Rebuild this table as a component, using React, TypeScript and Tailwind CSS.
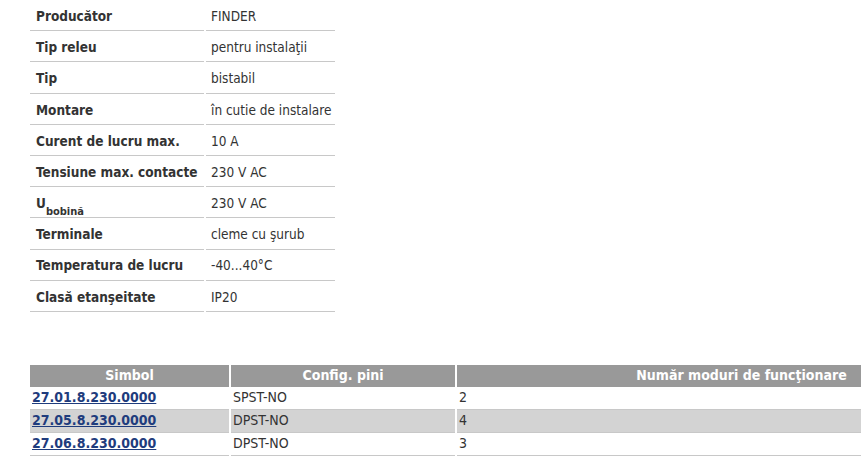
const specs: [React.ReactNode, string][] = [
  ["Producător", "FINDER"],
  ["Tip releu", "pentru instalaţii"],
  ["Tip", "bistabil"],
  ["Montare", "în cutie de instalare"],
  ["Curent de lucru max.", "10 A"],
  ["Tensiune max. contacte", "230 V AC"],
  [
    <>
      U<sub className="text-[11px] align-[-4px]">bobină</sub>
    </>,
    "230 V AC",
  ],
  ["Terminale", "cleme cu şurub"],
  ["Temperatura de lucru", "-40...40°C"],
  ["Clasă etanşeitate", "IP20"],
];

const products = [
  { symbol: "27.01.8.230.0000", pins: "SPST-NO", modes: "2" },
  { symbol: "27.05.8.230.0000", pins: "DPST-NO", modes: "4" },
  { symbol: "27.06.8.230.0000", pins: "DPST-NO", modes: "3" },
];

export default function App() {
  return (
    <div
      className="w-[861px] h-[464px] overflow-hidden bg-white text-[#333] text-[14px]"
      style={{ fontFamily: '"DejaVu Sans Condensed", "DejaVu Sans", sans-serif' }}
    >
      {/* Spec table */}
      <table className="ml-[28px] text-[13.5px] border-separate border-spacing-x-[2px] border-spacing-y-0">
        <tbody>
          {specs.map(([label, value], i) => (
            <tr key={i}>
              <td className="w-[174px] h-[31.2px] pl-[6px] pt-[2px] font-bold border-b border-[#c8c8c8] whitespace-nowrap">
                {label}
              </td>
              <td className="w-[129px] h-[31.2px] pl-[5px] pt-[2px] border-b border-[#c8c8c8] whitespace-nowrap">
                {value}
              </td>
            </tr>
          ))}
        </tbody>
      </table>

      {/* Product table */}
      <table className="mt-[53px] ml-[28px] table-fixed w-[1000px] border-separate border-spacing-x-[2px] border-spacing-y-0">
        <thead>
          <tr className="bg-[#999] text-white font-bold">
            <th className="w-[199px] h-[22px] text-center">Simbol</th>
            <th className="w-[224px] h-[22px] text-center">Config. pini</th>
            <th className="h-[22px] text-center">Număr moduri de funcţionare</th>
          </tr>
        </thead>
        <tbody>
          {products.map((p, i) => (
            <tr key={p.symbol} className={i === 1 ? "bg-[#d3d3d3]" : ""}>
              <td className="h-[23px] pl-[2px] border-b border-[#c8c8c8]">
                <a href="#" className="font-bold text-[#1f3c7d] underline">
                  {p.symbol}
                </a>
              </td>
              <td className="h-[23px] pl-[2px] border-b border-[#c8c8c8]">{p.pins}</td>
              <td className="h-[23px] pl-[2px] border-b border-[#c8c8c8]">{p.modes}</td>
            </tr>
          ))}
        </tbody>
      </table>
    </div>
  );
}
